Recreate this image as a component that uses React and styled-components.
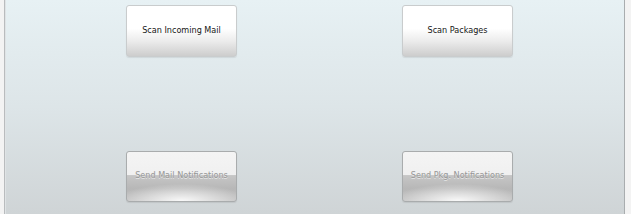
import React from "react";
import styled, { createGlobalStyle } from "styled-components";

const GlobalStyle = createGlobalStyle`
  html, body { margin: 0; padding: 0; }
  body {
    width: 631px;
    height: 214px;
    overflow: hidden;
    background: #f3f3f3;
    font-family: "DejaVu Sans", "Liberation Sans", sans-serif;
  }
`;

const Frame = styled.div`
  display: flex;
  height: 214px;
  width: 631px;
  box-sizing: border-box;
  padding: 0 6px 0 4px;
`;

const Panel = styled.div`
  flex: 1;
  border-left: 1px solid #b9bcbe;
  border-right: 1px solid #a9adaf;
  box-shadow: inset 1px 0 0 #dfe3e5;
  background: linear-gradient(to bottom, #e7f1f4 0%, #dde5e8 50%, #cfd4d6 100%);
  display: grid;
  grid-template-columns: 111px 111px;
  grid-template-rows: 52px 51px;
  column-gap: 165px;
  row-gap: 94px;
  padding: 5px 0 0 121px;
  align-content: start;
`;

const ActionButton = styled.button`
  box-sizing: border-box;
  width: 111px;
  height: 100%;
  margin: 0;
  padding: 0 0 2px;
  border: 1px solid #c9cccd;
  border-radius: 3px;
  font-family: "DejaVu Sans Condensed", "DejaVu Sans", sans-serif;
  font-size: 9px;
  color: #161616;
  background: linear-gradient(to bottom, #ffffff 0%, #ffffff 45%, #ececec 70%, #cdcdcd 100%);
  box-shadow: 0 1px 1px rgba(0, 0, 0, 0.08);
  cursor: pointer;

  &:disabled {
    padding: 0 0 4px;
    color: #979797;
    text-shadow: 0 1px 0 #e8e8e8;
    border-color: #a9acad;
    cursor: default;
    background:
      radial-gradient(ellipse 60% 35% at 50% 100%, rgba(255, 255, 255, 0.9), rgba(255, 255, 255, 0) 100%),
      linear-gradient(to bottom, #f4f4f4 0%, #f0f0f0 47%, #c6c6c6 48%, #b7b7b7 75%, #c2c2c2 100%);
  }
`;

export default function App() {
  return (
    <>
      <GlobalStyle />
      <Frame>
        <Panel>
          <ActionButton>Scan Incoming Mail</ActionButton>
          <ActionButton>Scan Packages</ActionButton>
          <ActionButton disabled>Send Mail Notifications</ActionButton>
          <ActionButton disabled>Send Pkg. Notifications</ActionButton>
        </Panel>
      </Frame>
    </>
  );
}
